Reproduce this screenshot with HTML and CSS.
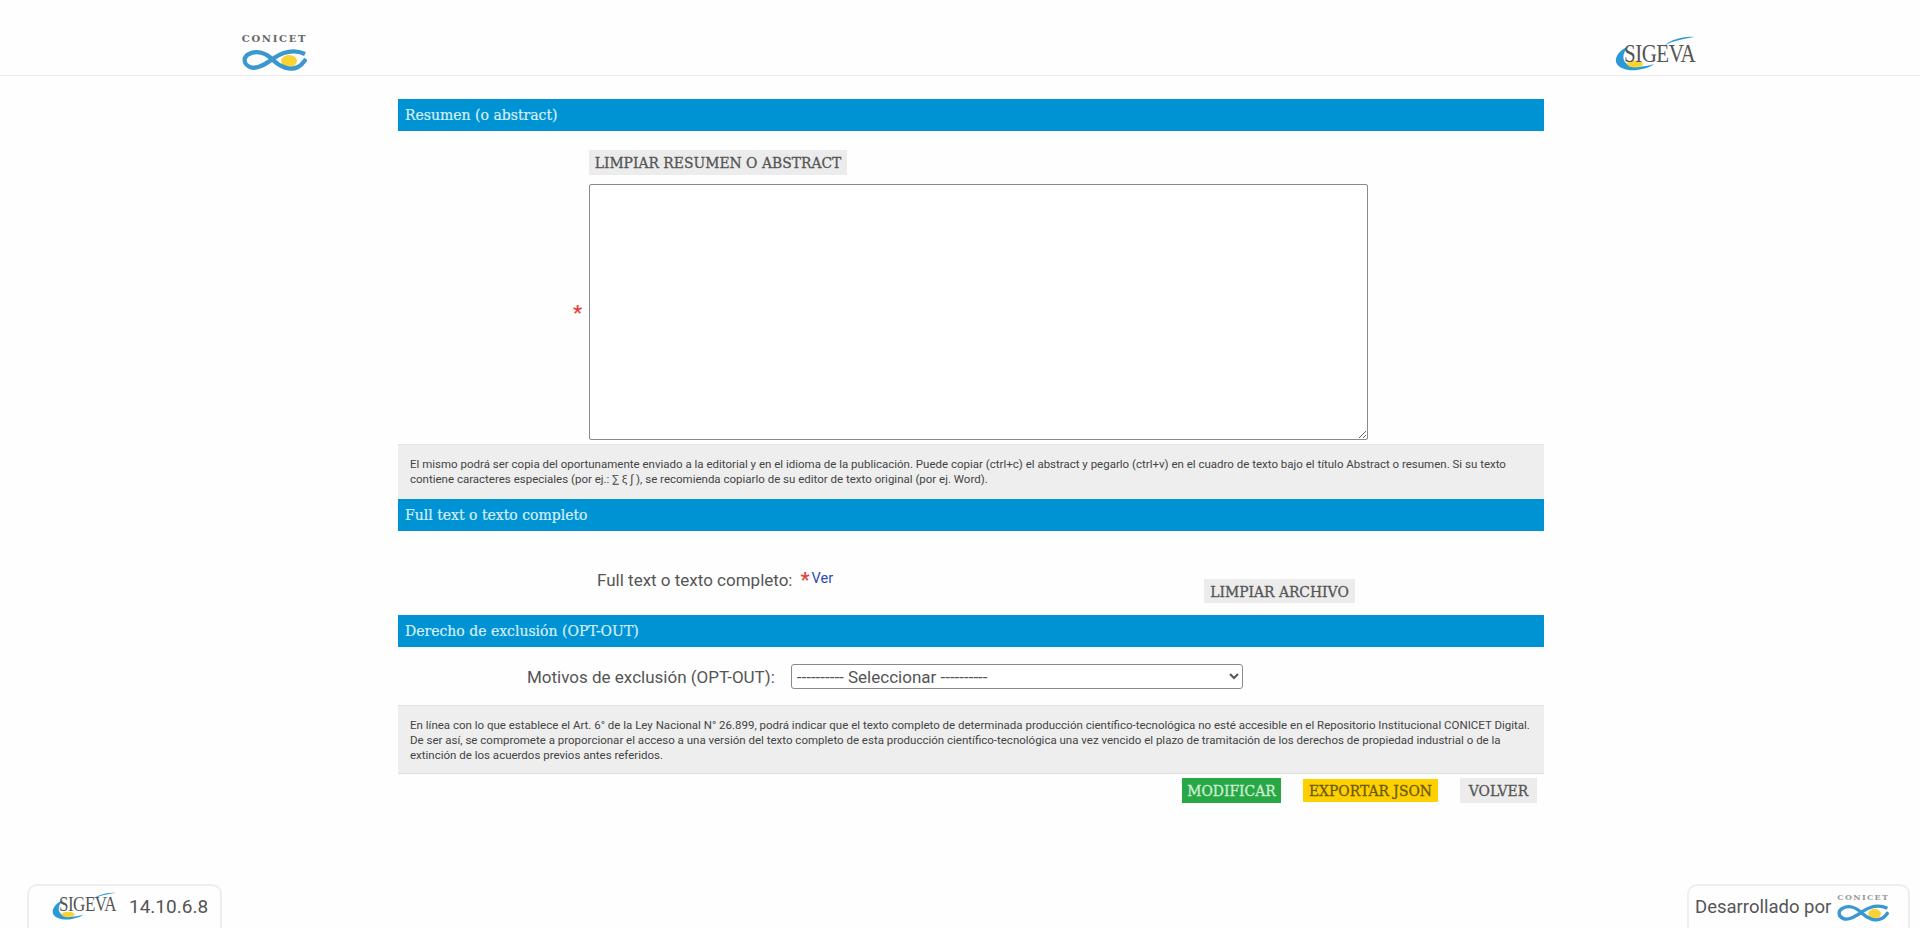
FILE: index.html
```html
<!DOCTYPE html>
<html>

	<head>
		<meta charset="UTF-8">
		<title>SIGEVA</title>
		<link rel="stylesheet" href="styles.css">
	</head>

	<body>
		<div class="page">
			<header class="top">
				<div class="logo-conicet">
					<span class="conicet-word">CONICET</span>
					<svg class="conicet-mark" width="65" height="22" viewBox="0 0 65 22">
						<ellipse cx="47" cy="12" rx="8" ry="6" fill="#f7d334" />
						<path d="M63 5C52 0 41 3 32 9C24 15 15 21 8 18C1 15 1 8 7 5C15 1 24 4 31 11C38 18 48 22 56 18C60 16 62 13 64 10" fill="none" stroke="#3a97cf" stroke-width="4.2" />
					</svg>
				</div>
				<div class="logo-sigeva">
					<svg class="sigeva-mark" width="82" height="36" viewBox="0 0 82 36">
						<path d="M79 1C68 0 56 4 50 9C58 5 68 3 79 1Z" fill="#2a9ad6" />
						<path d="M14 10C4 14 0 21 1 26C3 33 14 35 22 34C29 33 36 31 39 28C30 31 20 32 14 29C7 26 6 18 14 10Z" fill="#2a9ad6" />
						<ellipse cx="20" cy="28" rx="8" ry="3.5" fill="#f7d334" />
					</svg>
					<span class="sigeva-word">SIGEVA</span>
				</div>
			</header>

			<main class="content">
				<h2 class="bar">Resumen (o abstract)</h2>
				<div class="abstract-row">
					<span class="star star-side">*</span>
					<div>
						<button class="btn btn-grey btn-clear">LIMPIAR RESUMEN O ABSTRACT</button>
						<textarea class="abstract"></textarea>
					</div>
				</div>
				<p class="note note-one">El mismo podrá ser copia del oportunamente enviado a la editorial y en el idioma de la publicación. Puede copiar (ctrl+c) el abstract y pegarlo (ctrl+v) en el cuadro de texto bajo el título Abstract o resumen. Si su texto contiene caracteres especiales (por ej.: ∑ ξ ∫ ), se recomienda copiarlo de su editor de texto original (por ej. Word).</p>

				<h2 class="bar">Full text o texto completo</h2>
				<div class="file-row">
					<label class="label">Full text o texto completo:</label>
					<span class="star">*</span>
					<a class="see" href="#">Ver</a>
					<button class="btn btn-grey btn-file">LIMPIAR ARCHIVO</button>
				</div>

				<h2 class="bar">Derecho de exclusión (OPT-OUT)</h2>
				<div class="select-row">
					<label class="label">Motivos de exclusión (OPT-OUT):</label>
					<select class="reason">
						<option>---------- Seleccionar ----------</option>
					</select>
				</div>
				<p class="note note-two">En línea con lo que establece el Art. 6° de la Ley Nacional N° 26.899, podrá indicar que el texto completo de determinada producción científico-tecnológica no esté accesible en el Repositorio Institucional CONICET Digital.<br>De ser así, se compromete a proporcionar el acceso a una versión del texto completo de esta producción científico-tecnológica una vez vencido el plazo de tramitación de los derechos de propiedad industrial o de la<br>extinción de los acuerdos previos antes referidos.</p>

				<div class="actions">
					<button class="btn btn-green">MODIFICAR</button>
					<button class="btn btn-yellow">EXPORTAR JSON</button>
					<button class="btn btn-grey">VOLVER</button>
				</div>
			</main>

			<footer class="bottom">
				<div class="tab tab-left">
					<div class="logo-sigeva logo-small">
						<svg class="sigeva-mark" width="66" height="29" viewBox="0 0 82 36">
							<path d="M79 1C68 0 56 4 50 9C58 5 68 3 79 1Z" fill="#2a9ad6" />
							<path d="M14 10C4 14 0 21 1 26C3 33 14 35 22 34C29 33 36 31 39 28C30 31 20 32 14 29C7 26 6 18 14 10Z" fill="#2a9ad6" />
							<ellipse cx="20" cy="28" rx="8" ry="3.5" fill="#f7d334" />
						</svg>
						<span class="sigeva-word">SIGEVA</span>
					</div>
					<span class="version">14.10.6.8</span>
				</div>
				<div class="tab tab-right">
					<span class="version">Desarrollado por</span>
					<div class="logo-conicet logo-small">
						<span class="conicet-word">CONICET</span>
						<svg class="conicet-mark" width="52" height="18" viewBox="0 0 65 22">
							<ellipse cx="47" cy="12" rx="8" ry="6" fill="#f7d334" />
							<path d="M63 5C52 0 41 3 32 9C24 15 15 21 8 18C1 15 1 8 7 5C15 1 24 4 31 11C38 18 48 22 56 18C60 16 62 13 64 10" fill="none" stroke="#3a97cf" stroke-width="4.2" />
						</svg>
					</div>
				</div>
			</footer>
		</div>
	</body>

</html>
```

FILE: styles.css
```css
* {
	box-sizing: border-box;
}

body {
	margin: 0;
	background-color: #fefefe;
	color: #555;
	font-family: Roboto, "Liberation Sans", sans-serif;
}

.page {
	display: flex;
	flex-direction: column;
	height: 928px;
	overflow: hidden;
}

/* header */
.top {
	display: flex;
	justify-content: space-between;
	height: 76px;
	padding: 34px 223px 0 242px;
	border-bottom: 1px solid #eeeeee;
}

.logo-conicet {
	display: flex;
	flex-direction: column;
	align-items: center;
	width: 65px;
}

.conicet-word {
	font-family: "DejaVu Serif", serif;
	font-size: 10px;
	line-height: 10px;
	letter-spacing: 1.7px;
	font-weight: bold;
	color: #666;
	white-space: nowrap;
}

.conicet-mark {
	margin-top: 5px;
}

.logo-sigeva {
	position: relative;
	width: 82px;
	height: 36px;
	margin-top: 2px;
}

.sigeva-mark {
	display: block;
}

.sigeva-word {
	position: absolute;
	left: 9px;
	top: 6px;
	font-family: "Liberation Serif", serif;
	font-size: 21px;
	line-height: 24px;
	letter-spacing: -0.5px;
	color: #555;
	transform: scaleY(1.2);
}

/* main column */
.content {
	width: 1146px;
	margin: 23px 0 0 398px;
}

.bar {
	height: 32px;
	margin: 0;
	padding: 0 7px;
	background-color: #0093d3;
	color: #d8eff9;
	font-family: "DejaVu Serif", serif;
	font-size: 14px;
	font-weight: normal;
	line-height: 33px;
	-webkit-text-stroke: 0.2px #d8eff9;
}

.btn {
	height: 25px;
	padding: 0 4px;
	border: 0;
	font-family: "DejaVu Serif", serif;
	font-size: 13.9px;
	font-weight: normal;
	color: #555;
	-webkit-text-stroke: 0.3px currentColor;
	white-space: nowrap;
}

.btn-grey {
	background-color: #ececec;
}

.btn-green {
	background-color: #28a745;
	color: #cdeed5;
}

.btn-yellow {
	background-color: #ffd000;
	color: #6b5a0a;
	height: 23px;
}

.abstract-row {
	display: grid;
	grid-template-columns: 191px 1fr;
	align-items: center;
}

.btn-clear {
	display: block;
	width: 258px;
	margin-top: 19px;
}

.abstract {
	display: block;
	width: 779px;
	height: 256px;
	margin-top: 9px;
	border: 1px solid #8a8a8a;
	border-radius: 2px;
	background-color: #fff;
}

.star {
	color: #e8413c;
	font-size: 20px;
	font-weight: bold;
	line-height: 16px;
}

.star-side {
	justify-self: end;
	margin: 54px 7px 0 0;
}

.note {
	margin: 0;
	padding: 12px 12px 0;
	background-color: #eeeeee;
	border-top: 1px solid #e2e2e2;
	font-size: 11.5px;
	line-height: 15px;
	color: #444;
}

.note-one {
	height: 55px;
	margin-top: 4px;
}

.note-two {
	height: 69px;
	margin-top: 16px;
	border-bottom: 1px solid #dddddd;
}

.file-row {
	display: flex;
	height: 84px;
	padding: 39px 189px 0 199px;
}

.label {
	font-size: 17px;
	line-height: 20px;
}

.file-row .star {
	margin: 0 0 0 8px;
	line-height: 20px;
}

.see {
	margin: 0 0 0 2px;
	font-size: 14.5px;
	line-height: 18px;
	color: #2d4bb5;
	text-decoration: none;
}

.btn-file {
	align-self: flex-start;
	width: 151px;
	height: 24px;
	margin: 9px 0 0 auto;
	padding-top: 2px;
}

.select-row {
	display: flex;
	align-items: center;
	height: 25px;
	margin-top: 17px;
	padding-left: 129px;
}

.reason {
	width: 452px;
	height: 25px;
	margin-left: 16px;
	padding-left: 1px;
	border: 1px solid #8a8a8a;
	border-radius: 3px;
	background-color: #fff;
	font-family: Roboto, "Liberation Sans", sans-serif;
	font-size: 17px;
	color: #555;
}

.actions {
	display: flex;
	align-items: center;
	justify-content: flex-end;
	gap: 22px;
	height: 25px;
	margin-top: 4px;
	padding-right: 7px;
}

.actions .btn-green {
	width: 99px;
}

.actions .btn-yellow {
	width: 135px;
}

.actions .btn-grey {
	width: 77px;
}

/* bottom tabs */
.bottom {
	display: flex;
	justify-content: space-between;
	margin-top: auto;
	padding: 0 10px 0 27px;
}

.tab {
	display: flex;
	align-items: flex-start;
	height: 44px;
	border: 2px solid #eeeeee;
	border-bottom: 0;
	border-radius: 10px 10px 0 0;
}

.tab-left {
	width: 195px;
	padding: 6px 0 0 23px;
}

.tab-right {
	width: 223px;
	padding: 6px 0 0 6px;
}

.version {
	font-size: 18.5px;
	line-height: 30px;
	color: #555;
	white-space: nowrap;
}

.tab-left .version {
	margin-left: 11px;
	font-size: 19px;
}

.logo-small.logo-sigeva {
	width: 66px;
	height: 29px;
	margin-top: 0;
}

.logo-small .sigeva-word {
	left: 7px;
	top: 3px;
	font-size: 17px;
	line-height: 20px;
}

.logo-small.logo-conicet {
	width: 52px;
	margin: 1px 0 0 6px;
}

.logo-small .conicet-word {
	font-size: 8px;
	line-height: 8px;
	letter-spacing: 1.3px;
	color: #999;
}

.logo-small .conicet-mark {
	margin-top: 3px;
}
```
